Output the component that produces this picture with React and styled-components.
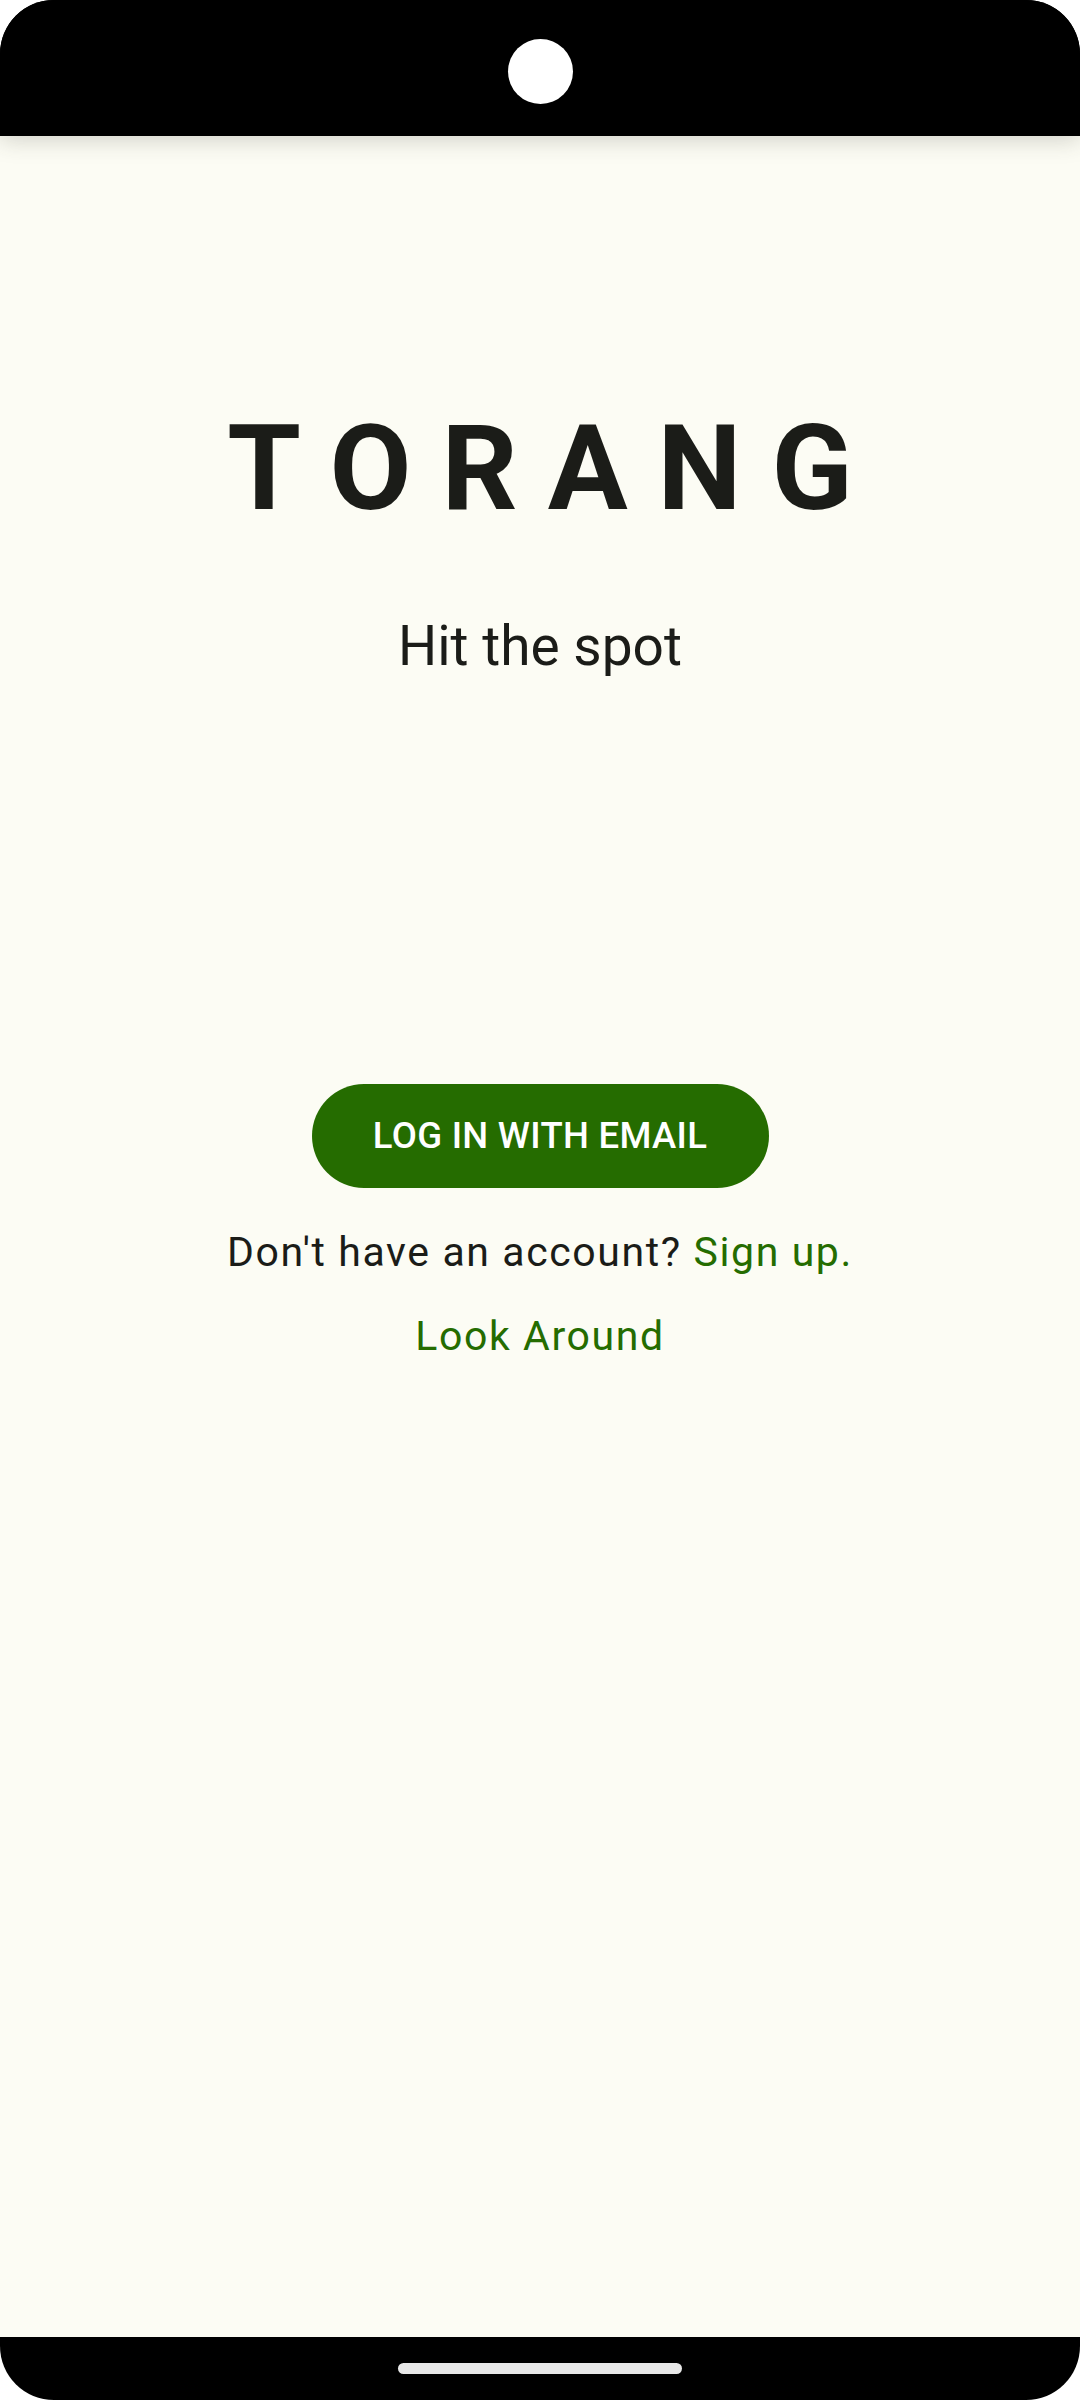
import React from "react";
import styled, { createGlobalStyle } from "styled-components";

const GlobalStyle = createGlobalStyle`
  html, body {
    margin: 0;
    padding: 0;
    background: #ffffff;
  }
  * { box-sizing: border-box; }
`;

const Phone = styled.div`
  width: 1080px;
  height: 2400px;
  display: flex;
  flex-direction: column;
  background: #000;
  border-radius: 54px;
  overflow: hidden;
  font-family: Roboto, "Noto Sans", sans-serif;
`;

const StatusBar = styled.div`
  height: 136px;
  flex-shrink: 0;
  display: flex;
  align-items: center;
  justify-content: center;
  background: #000;
  position: relative;
  z-index: 1;
  box-shadow: 0 4px 22px rgba(60, 60, 50, 0.22);
`;

const Camera = styled.div`
  width: 65px;
  height: 65px;
  border-radius: 50%;
  background: #fff;
  margin-top: 6px;
`;

const Screen = styled.main`
  flex: 1;
  background: #fcfcf4;
  display: flex;
  flex-direction: column;
  align-items: center;
  padding-top: 273px;
  color: #1b1c18;
`;

const Title = styled.h1`
  margin: 0;
  font-size: 119px;
  line-height: 119px;
  font-weight: 700;
  letter-spacing: 30px;
  padding-left: 30px;
`;

const Tagline = styled.p`
  margin: 86px 0 0;
  font-size: 55px;
  line-height: 64px;
  font-weight: 400;
`;

const LoginButton = styled.button`
  margin-top: 406px;
  width: 457px;
  height: 104px;
  border: none;
  border-radius: 52px;
  background: #256c00;
  color: #fff;
  font-family: inherit;
  font-size: 36.5px;
  font-weight: 500;
  line-height: 104px;
  letter-spacing: 0.3px;
  padding: 0;
`;

const Line = styled.p`
  margin: ${(p) => p.$gap}px 0 0;
  font-size: 41px;
  line-height: 48px;
  letter-spacing: 1.6px;
  color: ${(p) => (p.$green ? "#256c00" : "#1b1c18")};
`;

const Link = styled.span`
  color: #256c00;
`;

const NavBar = styled.div`
  height: 63px;
  flex-shrink: 0;
  display: flex;
  justify-content: center;
  padding-top: 26px;
`;

const HomeHandle = styled.div`
  width: 284px;
  height: 11px;
  border-radius: 6px;
  background: #e8e8e8;
`;

export default function App() {
  return (
    <>
      <GlobalStyle />
      <Phone>
        <StatusBar>
          <Camera />
        </StatusBar>
        <Screen>
          <Title>TORANG</Title>
          <Tagline>Hit the spot</Tagline>
          <LoginButton>LOG IN WITH EMAIL</LoginButton>
          <Line $gap={40}>
            Don't have an account? <Link>Sign up.</Link>
          </Line>
          <Line $gap={36} $green>
            Look Around
          </Line>
        </Screen>
        <NavBar>
          <HomeHandle />
        </NavBar>
      </Phone>
    </>
  );
}
